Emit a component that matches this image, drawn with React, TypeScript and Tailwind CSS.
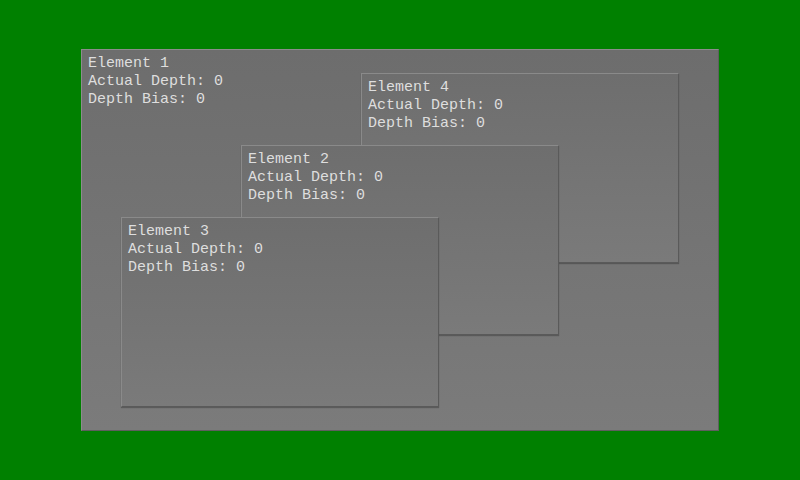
import React from 'react';

type Item = { name: string; left: number; top: number };

// element windows placed on the panel's free canvas
const ITEMS: Item[] = [
  { name: 'Element 4', left: 280, top: 24 },
  { name: 'Element 2', left: 160, top: 96 },
  { name: 'Element 3', left: 40, top: 168 },
];

const Info: React.FC<{ name: string }> = ({ name }) => (
  <div className="text-[15px] leading-[18px] text-[#dedede] whitespace-pre">
    <div>{name}</div>
    <div>Actual Depth: 0</div>
    <div>Depth Bias: 0</div>
  </div>
);

const App: React.FC = () => {
  return (
    <div
      className="w-[800px] h-[480px] bg-[#008000] flex items-start justify-start pl-[81px] pt-[49px]"
      style={{ fontFamily: '"Liberation Mono", "Courier New", monospace' }}
    >
      <div className="relative w-[638px] h-[382px] bg-gradient-to-b from-[#6d6d6d] to-[#7b7b7b] border border-t-[#8c8c8c] border-l-[#8c8c8c] border-r-[#5e5e5e] border-b-[#5e5e5e] px-[6px] pt-[5px]">
        <Info name="Element 1" />
        {ITEMS.map(it => (
          <div
            key={it.name}
            className="absolute w-[318px] h-[190px] bg-gradient-to-b from-[#6e6e6e] to-[#7a7a7a] border border-t-[#8a8a8a] border-l-[#8a8a8a] border-r-[#5a5a5a] border-b-[#5a5a5a] shadow-[0_1px_1px_rgba(0,0,0,0.25)] px-[6px] pt-[5px]"
            style={{ left: it.left - 1, top: it.top - 1 }}
          >
            <Info name={it.name} />
          </div>
        ))}
      </div>
    </div>
  );
};

export default App;
